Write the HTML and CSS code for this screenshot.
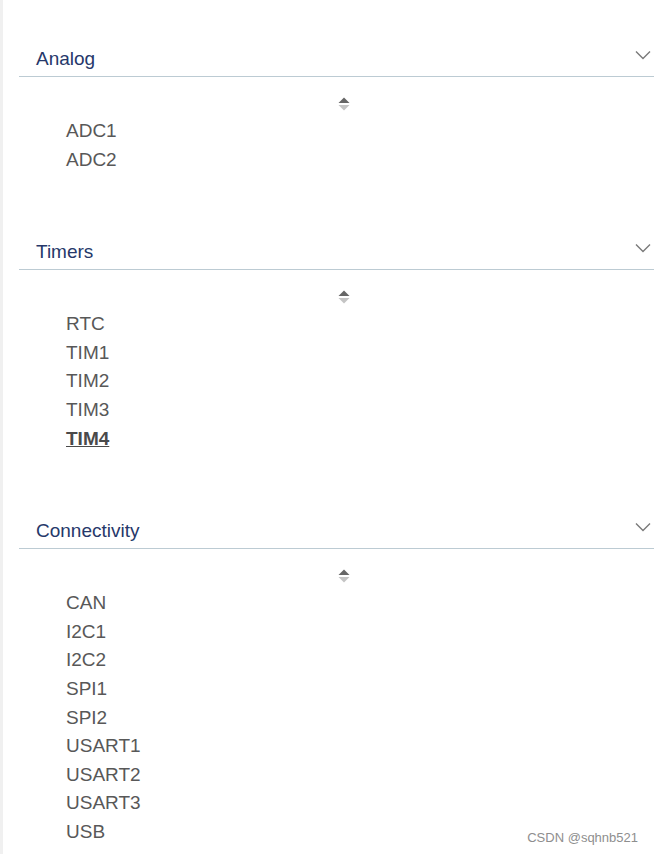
FILE: index.html
```html
<!DOCTYPE html>
<html>
<head>
<meta charset="utf-8">
<link rel="stylesheet" href="styles.css">
</head>
<body>
<div class="panel">
  <section class="group">
    <div class="group-head">
      <span class="group-title">Analog</span>
      <svg class="chev" width="16" height="10" viewBox="0 0 16 10"><path d="M1 1.5 L8 8.5 L15 1.5" fill="none" stroke="#7a7a7a" stroke-width="1.4"/></svg>
    </div>
    <div class="sort"><svg width="12" height="14" viewBox="0 0 12 14"><path d="M6 0.5 L11.5 6 L0.5 6 Z" fill="#666"/><path d="M0.5 8 L11.5 8 L6 13.5 Z" fill="#c4c4c4"/></svg></div>
    <ul class="items">
      <li>ADC1</li>
      <li>ADC2</li>
    </ul>
  </section>
  <section class="group">
    <div class="group-head">
      <span class="group-title">Timers</span>
      <svg class="chev" width="16" height="10" viewBox="0 0 16 10"><path d="M1 1.5 L8 8.5 L15 1.5" fill="none" stroke="#7a7a7a" stroke-width="1.4"/></svg>
    </div>
    <div class="sort"><svg width="12" height="14" viewBox="0 0 12 14"><path d="M6 0.5 L11.5 6 L0.5 6 Z" fill="#666"/><path d="M0.5 8 L11.5 8 L6 13.5 Z" fill="#c4c4c4"/></svg></div>
    <ul class="items">
      <li>RTC</li>
      <li>TIM1</li>
      <li>TIM2</li>
      <li>TIM3</li>
      <li class="active">TIM4</li>
    </ul>
  </section>
  <section class="group">
    <div class="group-head">
      <span class="group-title">Connectivity</span>
      <svg class="chev" width="16" height="10" viewBox="0 0 16 10"><path d="M1 1.5 L8 8.5 L15 1.5" fill="none" stroke="#7a7a7a" stroke-width="1.4"/></svg>
    </div>
    <div class="sort"><svg width="12" height="14" viewBox="0 0 12 14"><path d="M6 0.5 L11.5 6 L0.5 6 Z" fill="#666"/><path d="M0.5 8 L11.5 8 L6 13.5 Z" fill="#c4c4c4"/></svg></div>
    <ul class="items">
      <li>CAN</li>
      <li>I2C1</li>
      <li>I2C2</li>
      <li>SPI1</li>
      <li>SPI2</li>
      <li>USART1</li>
      <li>USART2</li>
      <li>USART3</li>
      <li>USB</li>
    </ul>
  </section>
  <div class="watermark">CSDN @sqhnb521</div>
</div>
</body>
</html>
```
FILE: styles.css
```css
html, body {
  margin: 0;
  padding: 0;
  background: #ffffff;
}
body {
  font-family: "Liberation Sans", Arial, sans-serif;
}
.panel {
  position: relative;
  box-sizing: border-box;
  min-height: 854px;
  border-left: 3px solid #f0f0f0;
  padding: 47px 0 0 16px;
}
.group {
  margin-bottom: 66px;
}
.group-head {
  display: flex;
  align-items: center;
  justify-content: space-between;
  height: 24px;
  padding: 0 3px 5px 17px;
  border-bottom: 1px solid #bccbd3;
}
.group-title {
  font-size: 19px;
  line-height: 24px;
  color: #26386a;
}
.chev {
  display: block;
  margin-top: -8px;
}
.sort {
  height: 14px;
  margin-top: 20px;
  padding-left: 319px;
}
.sort svg {
  display: block;
}
.items {
  list-style: none;
  margin: 6px 0 0 0;
  padding: 0 0 0 47px;
}
.items li {
  font-size: 19px;
  line-height: 28.6px;
  color: #585858;
}
.items li.active {
  font-weight: bold;
  text-decoration: underline;
  color: #4a4a4a;
}
.watermark {
  position: absolute;
  right: 16px;
  bottom: 9px;
  font-size: 13px;
  color: #8e8e8e;
}
```
